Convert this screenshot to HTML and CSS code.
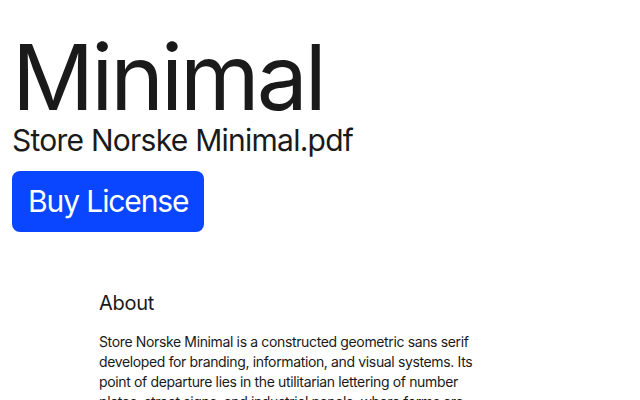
FILE: index.html
```html
<!DOCTYPE html>
<html>
<head>
<meta charset="utf-8">
<link rel="stylesheet" href="styles.css">
</head>
<body>
<header class="hero">
  <h1 class="title">Minimal</h1>
  <p class="file">Store Norske Minimal.pdf</p>
  <a class="buy" href="#">Buy License</a>
</header>
<section class="about">
  <h2 class="about-title">About</h2>
  <p class="about-text">Store Norske Minimal is a constructed geometric sans serif developed for branding, information, and visual systems. Its point of departure lies in the utilitarian lettering of number plates, street signs, and industrial panels, where forms are reduced to their essentials.</p>
</section>
</body>
</html>
```
FILE: styles.css
```css
html, body {
  margin: 0;
  padding: 0;
  background: #ffffff;
  color: #1a1a1a;
  font-family: Inter, "Liberation Sans", sans-serif;
}
.hero {
  padding: 27px 12px 0 12px;
  display: flex;
  flex-direction: column;
  align-items: flex-start;
}
.title {
  margin: 0;
  font-size: 91px;
  font-weight: 400;
  line-height: 100px;
  letter-spacing: -3px;
}
.file {
  margin: 0;
  font-size: 30px;
  line-height: 26px;
  font-weight: 400;
  letter-spacing: -0.75px;
}
.buy {
  margin-top: 18px;
  background: #0a45ff;
  color: #ffffff;
  text-decoration: none;
  font-size: 30px;
  line-height: 61px;
  letter-spacing: -1.1px;
  padding: 0 16px;
  border-radius: 8px;
}
.about {
  padding: 59px 0 0 99px;
  width: 385px;
}
.about-title {
  margin: 0;
  font-size: 20px;
  font-weight: 400;
  line-height: 24px;
  letter-spacing: -0.3px;
}
.about-text {
  margin: 17px 0 0 0;
  font-size: 14px;
  line-height: 20px;
  letter-spacing: -0.36px;
}
```
